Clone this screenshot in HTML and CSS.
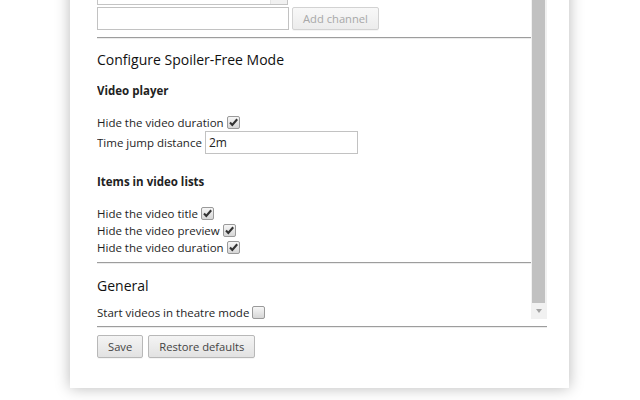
FILE: index.html
```html
<!DOCTYPE html>
<html lang="en">
<head>
<meta charset="utf-8">
<title>Options</title>
<link rel="stylesheet" href="styles.css">
</head>
<body>
<main class="card">
  <div class="scroll-frame">
    <div class="scroller">
      <div class="scroll-inner">
        <section class="channels">
          <div class="channel-list"><span class="list-bar"></span></div>
          <div class="add-row">
            <input class="text-input channel-input" type="text" aria-label="Channel">
            <button class="btn" type="button" disabled>Add channel</button>
          </div>
        </section>
        <hr class="rule">
        <h2 class="section-title">Configure Spoiler-Free Mode</h2>
        <h3 class="group-title">Video player</h3>
        <label class="opt">Hide the video duration<input class="check" type="checkbox" checked></label>
        <label class="opt opt-input">Time jump distance<input class="text-input jump" type="text" value="2m"></label>
        <h3 class="group-title group-title-2">Items in video lists</h3>
        <label class="opt">Hide the video title<input class="check" type="checkbox" checked></label>
        <label class="opt">Hide the video preview<input class="check" type="checkbox" checked></label>
        <label class="opt">Hide the video duration<input class="check" type="checkbox" checked></label>
        <hr class="rule rule-mid">
        <h2 class="section-title">General</h2>
        <label class="opt opt-last">Start videos in theatre mode<input class="check" type="checkbox"></label>
      </div>
    </div>
    <div class="scrollbar" aria-hidden="true">
      <span class="sb-thumb"></span>
      <span class="sb-button"><span class="sb-arrow"></span></span>
    </div>
  </div>
  <hr class="rule footer-rule">
  <div class="actions">
    <button class="btn" type="button">Save</button>
    <button class="btn" type="button">Restore defaults</button>
  </div>
</main>
</body>
</html>
```

FILE: styles.css
```css
html, body {
  margin: 0;
  height: 400px;
  overflow: hidden;
  background: #ffffff;
}
body {
  display: flex;
  flex-direction: column;
  justify-content: flex-end;
  align-items: flex-start;
  font-family: "Open Sans", "Noto Sans", sans-serif;
  font-size: 11.5px;
  color: #1e1e1e;
}
.card {
  flex-shrink: 0;
  margin: 0 0 12px 70px;
  width: 499px;
  box-sizing: border-box;
  padding: 0 22px 30px 27px;
  background: #fff;
  box-shadow: 0 0 14px rgba(0, 0, 0, 0.28);
}
.scroll-frame {
  display: flex;
  height: 400px;
}
.scroller {
  flex: 1;
  min-width: 0;
  overflow: hidden;
  display: flex;
  flex-direction: column-reverse;
}
.scroll-inner {
  flex-shrink: 0;
}
.scrollbar {
  width: 16px;
  flex-shrink: 0;
  display: flex;
  flex-direction: column;
  background: #f1f1f1;
}
.sb-thumb {
  flex: 1;
  margin: 40px 2px 0 1px;
  background: #c1c1c1;
}
.sb-button {
  height: 16px;
  display: flex;
  align-items: center;
  justify-content: center;
}
.sb-arrow {
  width: 0;
  height: 0;
  border-top: 4px solid #a3a3a3;
  border-left: 3.5px solid transparent;
  border-right: 3.5px solid transparent;
  margin-top: -1px;
}
.channels {
  padding-top: 40px;
}
.channel-list {
  position: relative;
  width: 191px;
  height: 90px;
  border: 1px solid #c4c4c4;
  box-sizing: border-box;
}
.list-bar {
  position: absolute;
  top: 0;
  right: 0;
  bottom: 0;
  width: 16px;
  background: #f1f1f1;
  border-left: 1px solid #e4e4e4;
}
.add-row {
  display: flex;
  align-items: flex-start;
  gap: 3px;
  margin-top: 2px;
}
.text-input {
  box-sizing: border-box;
  height: 23px;
  border: 1px solid #c2c2c2;
  padding: 0 3px;
  font: inherit;
  font-size: 12px;
  color: #222;
  background: #fff;
  margin: 0;
}
.channel-input {
  width: 192px;
}
.jump {
  width: 153px;
}
.btn {
  box-sizing: border-box;
  height: 23px;
  padding: 0 10px;
  margin: 0;
  font: inherit;
  font-size: 11.2px;
  color: #444;
  border: 1px solid #b8b8b8;
  border-radius: 2px;
  background: linear-gradient(#f4f4f4, #e2e2e2);
  box-shadow: 0 1px 0 rgba(0,0,0,0.04);
}
.btn:disabled {
  color: #a8a8a8;
  border-color: #d2d2d2;
  background: linear-gradient(#f8f8f8, #ececec);
}
.rule {
  border: 0;
  border-top: 1px solid #9d9d9d;
  border-bottom: 1px solid #ececec;
  margin: 7px 0 0;
}
.section-title {
  font-size: 14px;
  font-weight: normal;
  line-height: 20px;
  margin: 11.5px 0 8.5px;
  color: #111;
}
.group-title {
  font-size: 11.5px;
  font-weight: bold;
  line-height: 17px;
  margin: 17px 0 15px;
  color: #222;
}
.section-title + .group-title {
  margin-top: 11.5px;
}
.group-title-2 {
  margin-top: 18px;
}
.opt {
  display: flex;
  align-items: center;
  gap: 3px;
  height: 17px;
}
.opt-input {
  height: 24px;
}
.opt-last {
  margin-bottom: -2px;
}
.rule-mid {
  margin-top: 6.5px;
}
.check {
  appearance: none;
  -webkit-appearance: none;
  width: 13px;
  height: 13px;
  margin: 0;
  border: 1px solid #9a9a9a;
  border-radius: 2px;
  background-color: #e4e4e4;
  background-image: linear-gradient(#f6f6f6, #d6d6d6);
}
.check:checked {
  background-image: url("data:image/svg+xml,%3Csvg xmlns='http://www.w3.org/2000/svg' viewBox='0 0 11 11'%3E%3Cpath d='M2 5.6 L4.3 8 L9.2 2.2' fill='none' stroke='%23333' stroke-width='2.1'/%3E%3C/svg%3E"), linear-gradient(#f6f6f6, #d6d6d6);
}
.footer-rule {
  margin: 7px 0 7px;
}
.actions {
  display: flex;
  gap: 5px;
}
```
